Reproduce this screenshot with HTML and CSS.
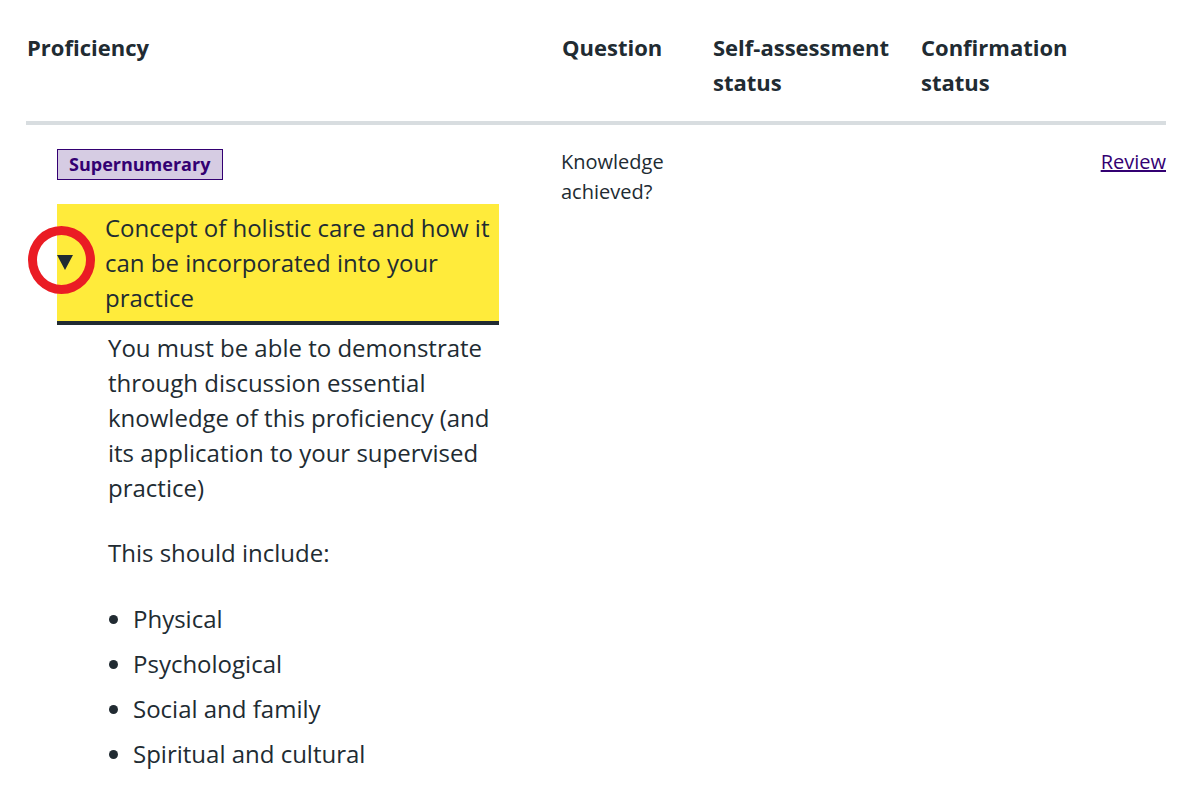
FILE: index.html
```html
<!DOCTYPE html>
<html lang="en">
<head>
<meta charset="utf-8">
<title>Proficiencies</title>
<link rel="stylesheet" href="styles.css">
</head>
<body>
<main class="page">
  <table class="prof-table">
    <colgroup>
      <col class="col-prof">
      <col class="col-question">
      <col class="col-self">
      <col class="col-confirm">
      <col class="col-action">
    </colgroup>
    <thead>
      <tr>
        <th>Proficiency</th>
        <th>Question</th>
        <th>Self-assessment status</th>
        <th>Confirmation status</th>
        <th></th>
      </tr>
    </thead>
    <tbody>
      <tr>
        <td class="cell-prof">
          <strong class="tag">Supernumerary</strong>
          <details class="details" open>
            <summary class="summary">
              <span class="marker"></span>
              <span class="summary-text">Concept of holistic care and how it can be incorporated into your practice</span>
              <span class="ring"></span>
            </summary>
            <div class="details-body">
              <p>You must be able to demonstrate through discussion essential knowledge of this proficiency (and its application to your supervised practice)</p>
              <p>This should include:</p>
              <ul class="list">
                <li>Physical</li>
                <li>Psychological</li>
                <li>Social and family</li>
                <li>Spiritual and cultural</li>
              </ul>
            </div>
          </details>
        </td>
        <td class="cell-small">Knowledge achieved?</td>
        <td></td>
        <td></td>
        <td class="cell-action"><a class="link" href="#">Review</a></td>
      </tr>
    </tbody>
  </table>
</main>
</body>
</html>
```

FILE: styles.css
```css
* { box-sizing: border-box; }

html, body {
  margin: 0;
  padding: 0;
  background: #ffffff;
}

body {
  font-family: "Open Sans", "Noto Sans", sans-serif;
  color: #212b32;
  font-size: 24px;
  line-height: 35px;
}

.page {
  padding: 13px 27px 0 26px;
}

.prof-table {
  width: 1140px;
  border-collapse: collapse;
  table-layout: fixed;
}

.col-prof { width: 535px; }
.col-question { width: 151px; }
.col-self { width: 208px; }
.col-confirm { width: 160px; }
.col-action { width: 86px; }

.prof-table th {
  text-align: left;
  vertical-align: top;
  font-weight: 700;
  font-size: 22px;
  line-height: 35px;
  padding: 17px 12px 21px 1px;
  border-bottom: 4px solid #d8dde0;
}

.prof-table td {
  vertical-align: top;
  padding: 22px 16px 0 0;
}

.prof-table td.cell-prof {
  padding-left: 31px;
  padding-right: 62px;
}

.cell-small {
  font-size: 20px;
  line-height: 30px;
}

.prof-table td.cell-action {
  text-align: right;
  padding-right: 0;
  font-size: 20px;
  line-height: 30px;
}

.link {
  color: #330072;
  text-decoration: underline;
}

.tag {
  display: inline-block;
  vertical-align: top;
  margin-top: 2px;
  padding: 0 12px 0 11px;
  font-size: 18px;
  line-height: 29px;
  font-weight: 700;
  color: #330072;
  background: #d6cce3;
  border: 1px solid #330072;
}

.details {
  margin-top: 22px;
}

.summary {
  position: relative;
  display: flex;
  align-items: center;
  list-style: none;
  background: #ffeb3b;
  border-bottom: 4px solid #212b32;
  padding: 6px 4px 6px 0;
  cursor: pointer;
}

.summary::-webkit-details-marker { display: none; }

.marker {
  flex: 0 0 48px;
  height: 35px;
  display: flex;
  align-items: center;
}

.marker::before {
  content: "";
  display: block;
  width: 0;
  height: 0;
  border-left: 8px solid transparent;
  border-right: 8px solid transparent;
  border-top: 15px solid #212b32;
}

.summary-text {
  flex: 1 1 auto;
}

.ring {
  position: absolute;
  left: -29px;
  top: 22px;
  width: 67px;
  height: 68px;
  border: 9px solid #ea1c24;
  border-radius: 50%;
  pointer-events: none;
}

.details-body {
  padding: 5px 0 0 51px;
}

.details-body p {
  margin: 0 0 30px;
}

.list {
  margin: 0;
  padding: 1px 0 0 25px;
}

.list li {
  margin-bottom: 10px;
}
```
